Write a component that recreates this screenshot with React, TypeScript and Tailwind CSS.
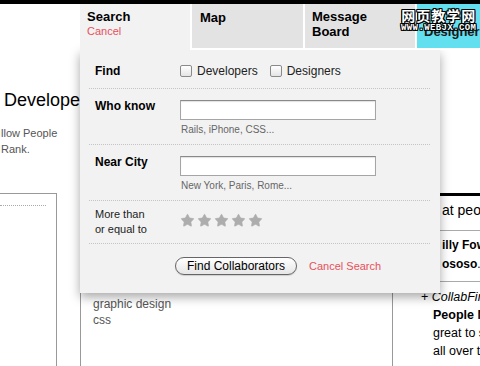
import { Star } from 'lucide-react';

const outline = '[text-shadow:1px_0_0_#000,-1px_0_0_#000,0_1px_0_#000,0_-1px_0_#000,1px_1px_0_#000,-1px_-1px_0_#000,1px_-1px_0_#000,-1px_1px_0_#000]';

export default function App() {
  return (
    <div className="relative h-[366px] w-[480px] overflow-hidden bg-white font-['Liberation_Sans',Arial,sans-serif] text-black">
      <div className="h-[4px] bg-black" />
      <BackgroundPage />
      <SearchPopup />
      <div className="pointer-events-none absolute left-[401px] top-[6px] z-20 flex flex-col items-center text-white">
        <div className={`font-['Noto_Sans_CJK_SC',sans-serif] text-[14px] font-bold leading-[18px] tracking-[1px] ${outline}`}>网页教学网</div>
        <div className={`-mt-[1px] font-['Liberation_Mono',monospace] text-[9px] font-bold leading-[10px] tracking-[0.4px] ${outline}`}>WWW.WEBJX.COM</div>
      </div>
    </div>
  );
}

function BackgroundPage() {
  return (
    <div>
      <div className="mt-[85px] pl-[4px] text-[18px] leading-[22px]">Developers</div>
      <div className="mt-[14px] pl-[1px] text-[11px] leading-[16px] text-[#555]">
        <div>llow People</div>
        <div>Rank.</div>
      </div>
      <div className="mt-[36px] flex h-[180px]">
        <div className="w-[57px] shrink-0 border-r border-t border-[#999]">
          <div className="mt-[11px] w-[46px] border-t border-dotted border-[#aaa]" />
        </div>
        <div className="ml-[23px] w-[312px] shrink-0 border-l border-[#999] pl-[12px] pt-[103px] text-[12px] leading-[16px] text-[#555]">
          <div>graphic design</div>
          <div>css</div>
        </div>
        <div className="min-w-0 flex-1 overflow-hidden border-l border-[#999]">
          <div className="ml-[9px] h-[3px] bg-black" />
          <div className="mt-[5px] whitespace-nowrap pl-[49px] text-[14px] leading-[18px]">at people say</div>
          <div className="ml-[9px] mt-[11px] border-t border-[#aaa]" />
          <div className="mt-[5px] whitespace-nowrap pl-[49px] text-[12px] font-bold leading-[19px]">
            <div>illy Fowler</div>
            <div>ososo<span className="font-normal">.</span></div>
          </div>
          <div className="ml-[9px] mt-[7px] border-t border-[#aaa]" />
          <div className="mt-[6px] whitespace-nowrap text-[12.5px] leading-[18px]">
            <div className="pl-[28px]">+ <span className="italic">CollabFinder</span></div>
            <div className="pl-[40px] font-bold">People Matching</div>
            <div className="pl-[40px]">great to see</div>
            <div className="pl-[40px]">all over the</div>
          </div>
        </div>
      </div>
    </div>
  );
}

function SearchPopup() {
  return (
    <div className="absolute left-[80px] top-[4px] w-[400px]">
      <div className="relative z-10 flex h-[46px] overflow-hidden">
        <div className="w-[110px] shrink-0 bg-[#f2f2f2] pl-[7px] pt-[6px] leading-[14px] shadow-[-4px_0_5px_-2px_rgba(0,0,0,0.3)]">
          <div className="text-[13px] font-bold">Search</div>
          <div className="text-[11px] text-[#e8505b]">Cancel</div>
        </div>
        <div className="w-[113px] shrink-0 border-b-2 border-l-2 border-white bg-[#e3e3e3] pl-[8px] pt-[6px] text-[13px] font-bold leading-[15px]">Map</div>
        <div className="w-[112px] shrink-0 border-b-2 border-l-2 border-white bg-[#e3e3e3] pl-[7px] pt-[5px] text-[13px] font-bold leading-[15px]">
          <div>Message</div>
          <div>Board</div>
        </div>
        <div className="w-[90px] shrink-0 whitespace-nowrap border-b-2 border-l-2 border-white bg-[#63e0f0] pl-[7px] pt-[20px] text-[13px] font-bold leading-[15px] text-[#1a1a1a]">Designers</div>
      </div>
      <div className="h-[243px] w-[360px] bg-[#f2f2f2] text-[12px] shadow-[0_4px_10px_rgba(0,0,0,0.35)]">
        <div className="flex h-[38px]">
          <div className="w-[100px] pl-[15px] pt-[13px] font-bold leading-[16px]">Find</div>
          <div className="flex items-center gap-[5px] pt-[4px] leading-[16px] text-[#222]">
            <Checkbox />
            <span className="mr-[7px]">Developers</span>
            <Checkbox />
            <span>Designers</span>
          </div>
        </div>
        <Separator />
        <FieldRow label="Who know" hint="Rails, iPhone, CSS..." />
        <Separator />
        <FieldRow label="Near City" hint="New York, Paris, Rome..." />
        <Separator />
        <div className="flex h-[42px]">
          <div className="w-[100px] pl-[15px] pt-[6px] text-[11px] leading-[15px] text-[#222]">
            <div>More than</div>
            <div>or equal to</div>
          </div>
          <div className="flex gap-[2px] pt-[12px]">
            {[0, 1, 2, 3, 4].map((i) => (
              <Star key={i} className="h-[15px] w-[15px] fill-[#adadad] text-[#adadad]" strokeWidth={1} />
            ))}
          </div>
        </div>
        <Separator />
        <div className="flex items-center pl-[95px] pt-[13px]">
          <button className="h-[18px] w-[122px] rounded-full border border-[#666] bg-[linear-gradient(#ffffff,#e6e6e6)] text-[12px] leading-[16px] text-black shadow-[0_1px_1px_rgba(0,0,0,0.15)]">
            Find Collaborators
          </button>
          <span className="ml-[12px] text-[11px] text-[#e8505b]">Cancel Search</span>
        </div>
      </div>
    </div>
  );
}

function FieldRow({ label, hint }: { label: string; hint: string }) {
  return (
    <div className="flex h-[55px]">
      <div className="w-[100px] pl-[15px] pt-[9px] font-bold leading-[16px]">{label}</div>
      <div className="pt-[11px]">
        <div className="h-[20px] w-[196px] border border-[#a5a5a5] border-t-[#8a8a8a] bg-white shadow-[inset_0_1px_1px_rgba(0,0,0,0.12)]" />
        <div className="mt-[4px] pl-[1px] text-[10px] leading-[12px] text-[#666]">{hint}</div>
      </div>
    </div>
  );
}

function Separator() {
  return <div className="ml-[9px] mr-[10px] border-t border-dotted border-[#c4c4c4]" />;
}

function Checkbox() {
  return <span className="inline-block h-[12px] w-[12px] rounded-[2px] border border-[#8a8a8a] bg-[linear-gradient(#ffffff,#e4e4e4)]" />;
}
